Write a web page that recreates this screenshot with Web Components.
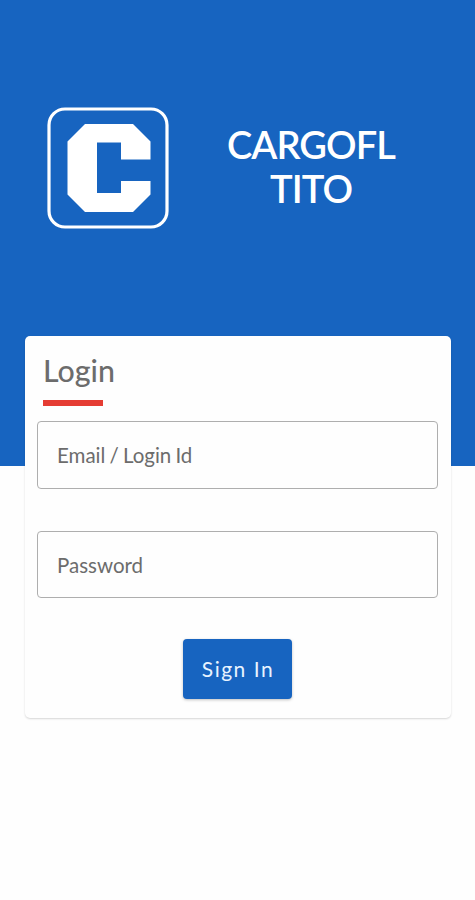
<!DOCTYPE html>
<html lang="en">
<head>
<meta charset="utf-8">
<title>CargoFL TITO</title>
<style>
html, body { margin: 0; height: 100%; background: #fefefe; }
body { font-family: Lato, "Liberation Sans", sans-serif; overflow: hidden; }
</style>
</head>
<body>
<login-page></login-page>
<script>
function define(name, html) {
  const t = document.createElement('template');
  t.innerHTML = html;
  customElements.define(name, class extends HTMLElement {
    constructor() {
      super();
      this.attachShadow({ mode: 'open' }).append(t.content.cloneNode(true));
    }
  });
}

define('brand-logo', `
<style>:host{display:block;width:122px;height:122px;flex:none} svg{display:block}</style>
<svg width="122" height="122" viewBox="0 0 122 122">
  <rect x="2" y="2" width="118" height="118" rx="16" fill="none" stroke="#fff" stroke-width="3.2"/>
  <path fill="#fff" d="M38 17H86L103.5 34.500V52.500H74V35.500H50V86H74V74H103.500V87.500L86 105H38L20.500 87.500V34.500Z"/>
</svg>`);

define('brand-header', `
<style>
:host{display:flex;box-sizing:border-box;height:466px;padding:107px 0 0 47px;background:#1764c0;color:#fff;align-items:flex-start}
h1{margin:16px 0 0 42px;width:200px;text-align:center;font-size:38px;line-height:43.5px;font-weight:600;letter-spacing:-.9px}
</style>
<brand-logo></brand-logo>
<h1><slot></slot></h1>`);

define('outlined-field', `
<style>
:host{display:flex;align-items:center;box-sizing:border-box;height:68px;padding:0 18px 0 19px;border:1.500px solid #aeaeae;border-radius:4px;color:#6c6c6c;font-size:20.5px;line-height:26px;word-spacing:-1.1px}
</style>
<span><slot></slot></span>`);

define('primary-button', `
<style>
:host{display:block}
button{display:block;box-sizing:border-box;width:109px;height:60px;padding:0 0 0 1px;border:0;border-radius:4px;background:#1764c0;color:#e8f3ff;font:400 21px/26px Lato,sans-serif;letter-spacing:1.5px;box-shadow:0 1px 3px rgba(0,0,0,.25)}
</style>
<button><slot></slot></button>`);

define('login-card', `
<style>
:host{display:flex;flex-direction:column;position:relative;box-sizing:border-box;margin:-130px 24px 0 25px;height:382px;padding:15px 13px 0 12px;border-radius:5px;background:#fefefe;box-shadow:0 1px 2px rgba(0,0,0,.16)}
h2{margin:0 0 0 6px;height:49px;font-size:30.3px;line-height:38px;font-weight:500;color:#6c6c6c}
.rule{width:60px;height:6px;margin-left:6px;background:#e53c33}
.email{margin-top:15px}
.password{margin-top:42px;height:67px}
primary-button{align-self:center;margin-top:41px}
</style>
<h2>Login</h2>
<div class="rule"></div>
<outlined-field class="email">Email / Login Id</outlined-field>
<outlined-field class="password">Password</outlined-field>
<primary-button>Sign In</primary-button>`);

define('login-page', `
<style>:host{display:block;height:900px;overflow:hidden}</style>
<brand-header>CARGOFL<br>TITO</brand-header>
<login-card></login-card>`);
</script>
</body>
</html>
